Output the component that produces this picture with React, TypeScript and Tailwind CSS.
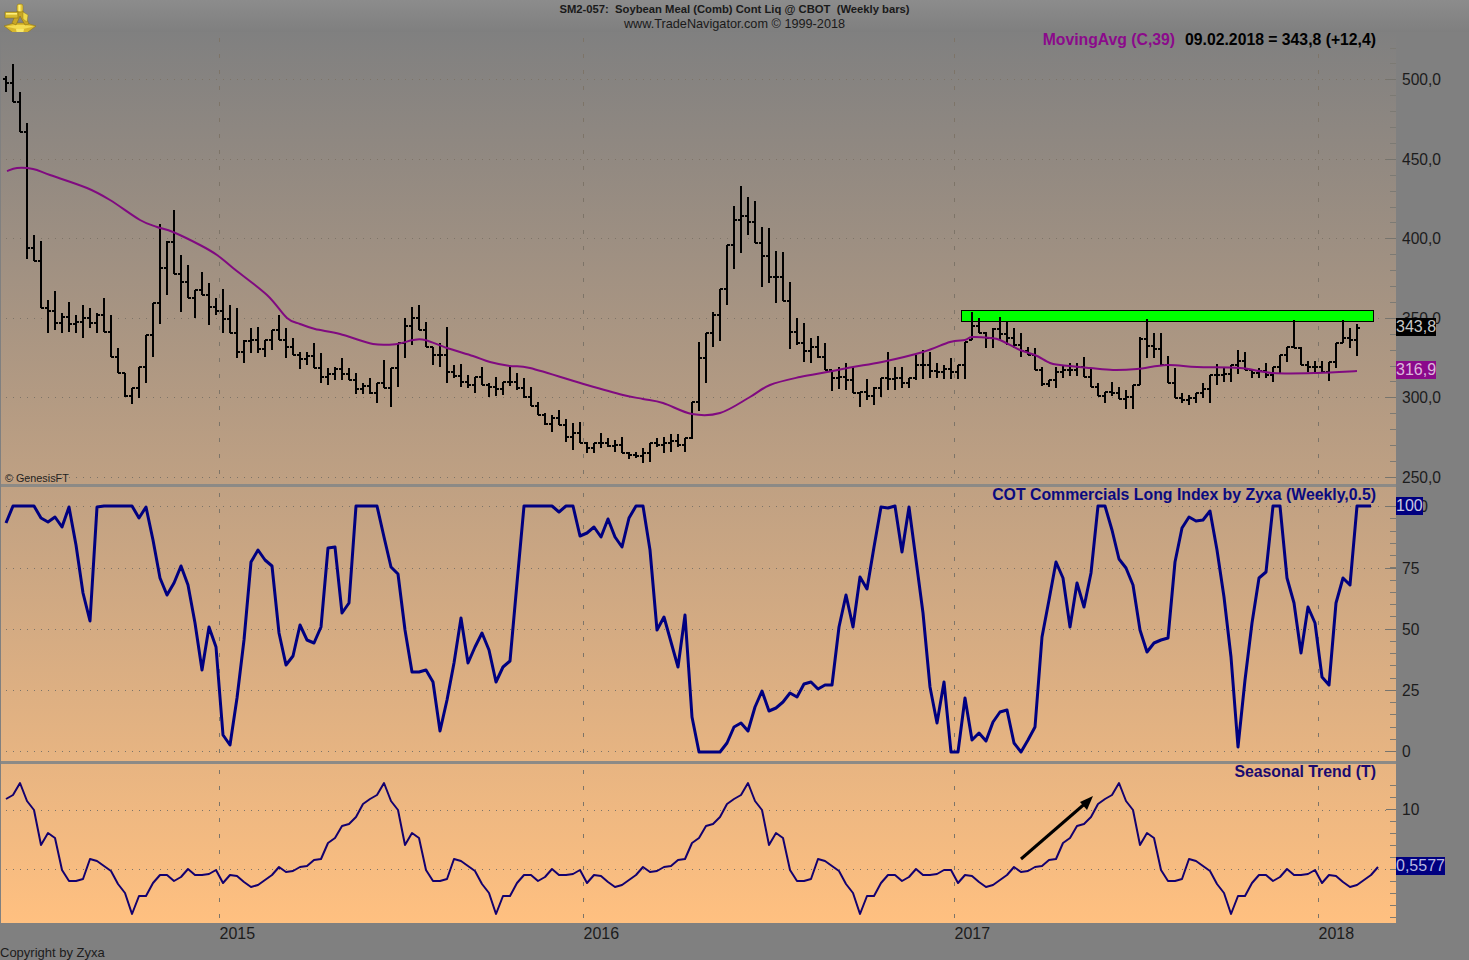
const sans = "font-['Liberation_Sans',Arial,sans-serif]";

// page x of weekly bar number i
const wx = (i: number) => 6 + 7 * i;

// [high, low] of every weekly bar, in page pixels
const bars: [number, number][] = [
  [76, 92], [64, 102], [92, 132], [123, 259], [235, 261], [241, 308], [300, 333], [291, 330], [313, 333], [302, 332],
  [315, 333], [305, 338], [308, 328], [313, 333], [298, 332], [315, 357], [348, 373], [373, 397], [388, 404], [367, 398],
  [335, 383], [303, 357], [224, 324], [241, 295], [210, 274], [255, 312], [265, 298], [290, 318], [272, 295], [283, 325],
  [298, 315], [289, 333], [305, 333], [308, 358], [340, 363], [328, 353], [327, 353], [340, 357], [330, 350], [315, 340],
  [328, 358], [338, 355], [352, 369], [352, 365], [343, 368], [353, 383], [368, 385], [367, 380], [358, 380], [368, 380],
  [373, 394], [383, 394], [378, 394], [383, 403], [360, 388], [368, 407], [343, 387], [318, 358], [307, 345], [305, 330],
  [322, 347], [347, 365], [343, 367], [327, 383], [365, 378], [364, 387], [375, 388], [377, 393], [367, 385], [383, 397],
  [377, 396], [382, 395], [367, 386], [373, 390], [378, 398], [387, 406], [402, 415], [413, 425], [415, 432], [410, 425],
  [419, 442], [423, 450], [422, 443], [442, 453], [443, 453], [433, 448], [438, 447], [440, 452], [437, 453], [452, 459],
  [452, 458], [448, 463], [443, 462], [438, 447], [437, 453], [434, 452], [434, 447], [438, 452], [402, 439], [342, 411],
  [333, 383], [312, 347], [289, 341], [245, 305], [206, 269], [186, 253], [197, 235], [201, 243], [227, 287], [228, 283],
  [251, 303], [252, 301], [282, 349], [318, 345], [323, 362], [338, 363], [336, 358], [343, 370], [370, 391], [367, 389],
  [363, 390], [367, 393], [392, 407], [379, 400], [387, 405], [378, 397], [352, 390], [367, 390], [367, 388], [378, 388],
  [355, 380], [350, 379], [352, 378], [363, 378], [365, 379], [358, 379], [365, 379], [342, 379], [312, 340], [318, 333],
  [332, 348], [328, 348], [317, 340], [322, 345], [328, 348], [333, 357], [347, 355], [348, 370], [367, 386], [380, 387],
  [367, 388], [365, 378], [363, 376], [363, 376], [357, 377], [368, 387], [383, 396], [392, 403], [382, 396], [387, 399],
  [390, 409], [385, 409], [337, 385], [319, 358], [333, 358], [333, 365], [356, 383], [368, 398], [393, 403], [395, 405],
  [393, 403], [383, 398], [375, 403], [364, 385], [367, 382], [365, 382], [350, 374], [352, 370], [370, 378], [368, 378],
  [363, 378], [367, 382], [355, 373], [347, 362], [320, 348], [347, 365], [361, 372], [361, 373], [361, 372], [362, 381],
  [343, 368], [320, 343], [328, 348], [324, 356],
];

const clamp = (v: number, a: number, b: number) => Math.min(b, Math.max(a, v));

const closes = bars.map(([h, l], i) => {
  if (i === bars.length - 1) return 328;
  const [nh, nl] = bars[i + 1];
  return Math.round(clamp((nh + nl) / 2, h, l));
});

const barPath = bars
  .map(([h, l], i) => {
    const x = wx(i);
    const open = i === 0 ? 79 : clamp(closes[i - 1], h, l);
    return `M${x} ${h}V${l}M${x - 3} ${open}H${x}M${x} ${closes[i]}H${x + 3}`;
  })
  .join("");

const maLine: [number, number][] = [
  [7, 171], [17, 168], [33, 169], [50, 175], [87, 188], [110, 200], [140, 220], [157, 227], [173, 232], [200, 245],
  [217, 255], [233, 268], [267, 295], [287, 318], [300, 324], [315, 329], [340, 334], [373, 344], [397, 344], [413, 340],
  [425, 340], [447, 348], [473, 356], [490, 362], [510, 366], [530, 368], [587, 385], [623, 395], [643, 399], [663, 403],
  [692, 414], [720, 413], [750, 397], [770, 385], [800, 377], [827, 372], [853, 367], [882, 362], [923, 352], [950, 342],
  [965, 340], [972, 337], [990, 338], [1000, 340], [1020, 350], [1035, 355], [1050, 363], [1060, 365], [1090, 368], [1113, 370],
  [1137, 369], [1167, 365], [1197, 367], [1240, 368], [1273, 373], [1317, 373], [1357, 371],
];

// round off the corners between the read-off points
const smooth = (pts: [number, number][]) =>
  pts.reduce((d, p, i) => {
    if (i === 0) return `M${p[0]} ${p[1]}`;
    const a = pts[Math.max(0, i - 2)];
    const b = pts[i - 1];
    const c = pts[Math.min(pts.length - 1, i + 1)];
    const c1 = [b[0] + (p[0] - a[0]) / 6, b[1] + (p[1] - a[1]) / 6];
    const c2 = [p[0] - (c[0] - b[0]) / 6, p[1] - (c[1] - b[1]) / 6];
    return `${d}C${c1[0]} ${c1[1]} ${c2[0]} ${c2[1]} ${p[0]} ${p[1]}`;
  }, "");

const cot = [
  523, 506, 506, 506, 506, 518, 522, 517, 527, 507, 545, 593, 621, 507, 506, 506, 506, 506, 506, 518,
  507, 540, 578, 595, 583, 566, 585, 623, 670, 627, 647, 735, 745, 698, 640, 562, 550, 560, 566, 633,
  665, 656, 625, 640, 643, 627, 548, 547, 613, 603, 506, 506, 506, 506, 537, 567, 574, 630, 672, 672,
  670, 682, 731, 700, 663, 618, 663, 647, 633, 650, 682,
  667, 661, 583, 506, 506, 506, 506, 506, 512, 506, 506, 536, 533, 527, 537, 519, 537, 547, 518, 506,
  506, 550, 630, 617, 642, 667, 615, 717, 752, 752, 752, 752, 743, 727, 723, 731, 707, 691, 711, 708,
  702, 693, 697, 684, 682, 689, 685, 685, 627, 595, 627, 577, 589, 547, 507, 508, 506, 552, 507, 560,
  613, 687, 723, 682, 752, 752, 698, 740, 733, 741, 722,
  712, 710, 743, 752, 740, 727, 637, 600, 562, 578, 627, 583, 607, 573, 506, 506, 530, 559, 568, 585,
  630, 652, 643, 640, 638, 562, 528, 517, 521, 520, 511, 550, 597, 657, 747, 680, 623, 578, 572, 506,
  506, 578, 603, 653, 607, 623, 677, 685, 603, 578, 585, 506, 506, 506,
];

// one year of the seasonal curve, 52 weeks
const season = [
  799, 795, 783, 801, 810, 845, 833, 838, 870, 881, 881, 879, 859, 861, 866, 871, 884, 893, 914, 896,
  896, 883, 875, 875, 881, 877, 869, 875, 875, 874, 870, 883, 875, 876, 882, 887, 885, 880, 875, 867,
  872, 871, 867, 866, 860, 859, 843, 838, 826, 824, 817, 804,
];

const seasonal = Array.from({ length: 197 }, (_, i) => season[(i <= 135 ? (i === 135 ? 134 : i) : i - 1) % 52]);

const toPoints = (ys: number[]) => ys.map((y, i) => `${wx(i)},${y}`).join(" ");

const years = [
  { label: "2015", x: 219.5 },
  { label: "2016", x: 583.5 },
  { label: "2017", x: 954.5 },
  { label: "2018", x: 1318.5 },
];

const range = (from: number, step: number, n: number) => Array.from({ length: n }, (_, i) => from + step * i);

function Pane({
  top,
  height,
  grid,
  minor,
  major,
  children,
}: {
  top: number;
  height: number;
  grid: number[];
  minor: number[];
  major: number[];
  children: React.ReactNode;
}) {
  return (
    <svg width={1395} height={height} viewBox={`1 ${top} 1395 ${height}`} className="absolute inset-0">
      {grid.map((y) => (
        <line key={y} x1={6} x2={1387} y1={y + 0.5} y2={y + 0.5} stroke="#7d7468" strokeDasharray="1 6" />
      ))}
      {years.map((yr) => (
        <line key={yr.x} x1={yr.x} x2={yr.x} y1={top} y2={top + height} stroke="#7d7468" strokeDasharray="4 12" strokeDashoffset={-6} />
      ))}
      {minor.map((y) => (
        <line key={y} x1={1390} x2={1396} y1={y + 0.5} y2={y + 0.5} stroke="#7c7a74" />
      ))}
      {major.map((y) => (
        <line key={y} x1={1386} x2={1396} y1={y + 0.5} y2={y + 0.5} stroke="#76746e" />
      ))}
      {children}
    </svg>
  );
}

function Sextant() {
  return (
    <svg width={36} height={36} viewBox="0 0 36 36" className="ml-[1px] mt-[1px]">
      {/* graduated arc */}
      <path d="M3 25 L13 22 L25 22 L35 25 L23 34 L15 34 Z" fill="#d9b82e" stroke="#8f7714" strokeWidth={0.6} />
      <path d="M5 25.5 L14 24 L24 24 L33 25.5 L22 28 L16 28 Z" fill="#f3dc50" />
      <path d="M15 28 L23 28 L22 33 L16 33 Z" fill="#f8e868" />
      {/* frame */}
      <path d="M16 10 L22 10 L28 23 L24 24 L19 15 L15 24 L11 22 Z" fill="#c9a726" stroke="#86700f" strokeWidth={0.5} />
      {/* index post */}
      <rect x={16} y={3} width={6} height={8} rx={2} fill="#e4c63a" stroke="#8f7714" strokeWidth={0.5} />
      <rect x={17.5} y={4} width={2} height={6} fill="#fff07a" />
      {/* telescope */}
      <rect x={4} y={11} width={13} height={6} fill="#d8bb30" stroke="#7d680f" strokeWidth={0.5} />
      <rect x={5} y={12} width={11} height={1.6} fill="#fff07a" />
      {/* mirror */}
      <path d="M22 11 L27 14 L26 21 L22 18 Z" fill="#efd84a" stroke="#8f7714" strokeWidth={0.4} />
    </svg>
  );
}

function AxisLabel({ y, x = 1402, text }: { y: number; x?: number; text: string }) {
  return (
    <span className="absolute leading-[18px] text-[15.6px] text-[#1c1c1c]" style={{ top: y - 32 - 8, left: x - 1396 }}>
      {text}
    </span>
  );
}

function Marker({ y, text, className }: { y: number; text: string; className: string }) {
  return (
    <span className={`absolute left-0 leading-[18px] text-[16px] ${className}`} style={{ top: y - 32 - 9 }}>
      {text}
    </span>
  );
}

export default function App() {
  const topGrid = [79, 159, 238, 318, 397, 477];
  const midGrid = [506, 568, 629, 690, 751];
  const lowGrid = [810, 869];

  return (
    <div className={`w-[1469px] h-[960px] bg-[#808080] flex flex-col overflow-hidden ${sans}`}>
      {/* title strip */}
      <div className="h-[32px] grid grid-cols-[1fr_auto_1fr] bg-gradient-to-b from-[#8c8c8c] to-[#7f7f7f]">
        <div>
          <Sextant />
        </div>
        <div className="flex flex-col items-center pt-[2px] text-[#1a1a1a]">
          <span className="font-bold text-[11.25px] leading-[14px] whitespace-pre">SM2-057:  Soybean Meal (Comb) Cont Liq @ CBOT  (Weekly bars)</span>
          <span className="text-[12.7px] leading-[15px] mt-[1px]">www.TradeNavigator.com © 1999-2018</span>
        </div>
        <div />
      </div>

      <div className="h-[891px] flex">
        {/* chart panes share one long gradient */}
        <div className="w-[1395px] ml-[1px] flex flex-col bg-gradient-to-b from-[#808080] to-[#ffc080]">
          <div className="relative h-[452px] flex flex-col justify-between">
            <Pane
              top={32}
              height={452}
              grid={topGrid}
              minor={range(47.5, 15.9, 27).map(Math.round)}
              major={topGrid}
            >
              <rect x={961.5} y={310.5} width={412} height={11} fill="#00ff00" stroke="#000" />
              <path d={barPath} fill="none" stroke="#000" strokeWidth={2} shapeRendering="crispEdges" />
              <path d={smooth(maLine)} fill="none" stroke="#800a80" strokeWidth={2} />
            </Pane>
            <div className="relative flex justify-end gap-[10px] pr-[20px] text-[15.75px] leading-[15px] font-bold">
              <span className="text-[#8b0a8b]">MovingAvg (C,39)</span>
              <span className="text-black">09.02.2018 = 343,8 (+12,4)</span>
            </div>
            <span className="relative pl-[4px] -mb-[1px] text-[10.8px] leading-[13px] text-[#1f1f1f]">© GenesisFT</span>
          </div>
          <div className="h-[3px] bg-[#8c8a86]" />
          <div className="relative h-[274px]">
            <Pane top={487} height={274} grid={midGrid} minor={range(506, 12.25, 21).map(Math.round)} major={midGrid}>
              <polyline points={toPoints(cot)} fill="none" stroke="#000080" strokeWidth={3} strokeLinejoin="round" />
            </Pane>
            <div className="relative flex justify-end pr-[20px] text-[15.84px] leading-[15px] font-bold text-[#0a0a80]">
              COT Commercials Long Index by Zyxa (Weekly,0.5)
            </div>
          </div>
          <div className="h-[3px] bg-[#8c8a86]" />
          <div className="relative h-[159px]">
            <Pane top={764} height={159} grid={lowGrid} minor={range(785, 12, 12)} major={[809]}>
              <polyline points={toPoints(seasonal)} fill="none" stroke="#14006e" strokeWidth={2} strokeLinejoin="round" />
              <line x1={1021} y1={859} x2={1088} y2={801} stroke="#000" strokeWidth={3} />
              <path d="M1093 796 L1080 802 L1087 810 Z" fill="#000" />
            </Pane>
            <div className="relative flex justify-end pr-[20px] text-[15.84px] leading-[15px] font-bold text-[#1a0a70]">
              Seasonal Trend (T)
            </div>
          </div>
        </div>

        {/* price and indicator scale */}
        <div className="relative flex-1">
          {[
            ["500,0", 79],
            ["450,0", 159],
            ["400,0", 238],
            ["350,0", 318],
            ["300,0", 397],
            ["250,0", 477],
            ["75", 568],
            ["50", 629],
            ["25", 690],
            ["0", 751],
            ["10", 809],
          ].map(([text, y]) => (
            <AxisLabel key={text} text={text as string} y={y as number} />
          ))}
          <AxisLabel text="100" y={506} x={1402} />
          <Marker y={327} text="343,8" className="bg-black text-[#c8c8c8]" />
          <Marker y={370} text="316,9" className="bg-[#8b0a8b] text-[#dcb8dc]" />
          <Marker y={506} text="100" className="bg-[#000080] text-[#c8c8e0] w-[27px]" />
          <Marker y={866} text="0,5577" className="bg-[#000080] text-[#b8b8e0]" />
        </div>
      </div>

      {/* time scale */}
      <div className="relative flex-1 flex items-end text-[#1c1c1c]">
        {years.map((yr) => (
          <span key={yr.label} className="absolute top-[2px] text-[16px] leading-[18px]" style={{ left: yr.x }}>
            {yr.label}
          </span>
        ))}
        <span className="text-[13px] leading-[15px]">Copyright by Zyxa</span>
      </div>
    </div>
  );
}
